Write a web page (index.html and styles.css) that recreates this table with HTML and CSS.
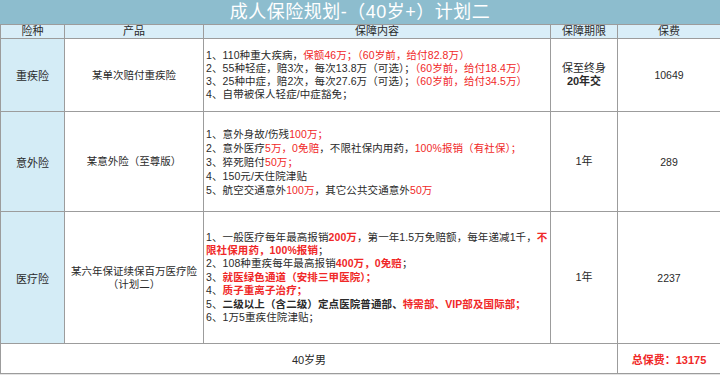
FILE: index.html
```html
<!DOCTYPE html>
<html lang="zh-CN">
<head>
    <meta charset="UTF-8">
    <meta name="viewport" content="width=device-width, initial-scale=1.0">
    <title>成人保险规划</title>
    <link rel="stylesheet" href="styles.css">
</head>
<body>
<div class="sheet">
    <div class="title">成人保险规划-（40岁+）计划二</div>

    <table class="plan">
        <colgroup>
            <col class="c-type">
            <col class="c-prod">
            <col class="c-info">
            <col class="c-term">
            <col class="c-fee">
        </colgroup>
        <tr class="head">
            <td>险种</td>
            <td>产品</td>
            <td>保障内容</td>
            <td>保障期限</td>
            <td>保费</td>
        </tr>

        <tr class="row1">
            <td class="type">重疾险</td>
            <td class="prod">某单次赔付重疾险</td>
            <td class="info">
                1、110种重大疾病，<span class="red">保额46万；（60岁前，给付82.8万）</span><br>
                2、55种轻症，赔3次，每次13.8万（可选）；<span class="red">（60岁前，给付18.4万）</span><br>
                3、25种中症，赔2次，每次27.6万（可选）；<span class="red">（60岁前，给付34.5万）</span><br>
                4、自带被保人轻症/中症豁免；
            </td>
            <td class="term">保至终身<br><b>20年交</b></td>
            <td class="fee">10649</td>
        </tr>

        <tr class="row2">
            <td class="type">意外险</td>
            <td class="prod">某意外险（至尊版）</td>
            <td class="info">
                1、意外身故/伤残<span class="red">100万；</span><br>
                2、意外医疗<span class="red">5万，0免赔</span>，不限社保内用药，<span class="red">100%报销（有社保）；</span><br>
                3、猝死赔付<span class="red">50万；</span><br>
                4、150元/天住院津贴<br>
                5、航空交通意外<span class="red">100万</span>，其它公共交通意外<span class="red">50万</span>
            </td>
            <td class="term">1年</td>
            <td class="fee">289</td>
        </tr>

        <tr class="row3">
            <td class="type">医疗险</td>
            <td class="prod">某六年保证续保百万医疗险<br>（计划二）</td>
            <td class="info">
                1、一般医疗每年最高报销<b class="red">200万</b>，第一年1.5万免赔额，每年递减1千，<b class="red">不</b><br>
                <b class="red">限社保用药，100%报销</b>；<br>
                2、108种重疾每年最高报销<b class="red">400万，0免赔</b>；<br>
                3、<b class="red">就医绿色通道（安排三甲医院）；</b><br>
                4、<b class="red">质子重离子治疗；</b><br>
                5、<b>二级以上（含二级）定点医院普通部、</b><b class="red">特需部、VIP部及国际部；</b><br>
                6、1万5重疾住院津贴；
            </td>
            <td class="term">1年</td>
            <td class="fee">2237</td>
        </tr>

        <tr class="foot">
            <td colspan="4">40岁男</td>
            <td class="total">总保费：13175</td>
        </tr>
    </table>
</div>
</body>
</html>
```

FILE: styles.css
```css
body {
    margin: 0;
    background: #e4e4e4;
    font-family: "Liberation Sans", "Noto Sans CJK SC", sans-serif;
    color: #2a2a2a;
}
.sheet {
    width: 720px;
    background: #fff;
}
.title {
    height: 24px;
    line-height: 24px;
    background: #8dbdce;
    color: #fff;
    font-size: 18px;
    text-align: center;
    letter-spacing: 0.5px;
}
.plan {
    width: 720px;
    border-collapse: collapse;
    table-layout: fixed;
    font-size: 10.5px;
}
.c-type { width: 64px; }
.c-prod { width: 139px; }
.c-info { width: 347px; }
.c-term { width: 67px; }
.c-fee  { width: 103px; }

.plan td {
    border: 1px solid #9c9c9c;
    padding: 0 2px;
    text-align: center;
    vertical-align: middle;
    white-space: nowrap;
}
.head td {
    height: 13px;
    line-height: 13px;
    background: #d9eef8;
    font-size: 11px;
}
.plan td.type {
    background: #d4ecf6;
    font-size: 11px;
}
.prod {
    line-height: 13px;
}
.info {
    text-align: left !important;
    line-height: 13px;
    letter-spacing: 0.1px;
}
.term {
    font-size: 11px;
    line-height: 13px;
}
.row1 td { height: 72px; }
.row2 td { height: 99px; }
.row2 .info { line-height: 14px; }
.row3 td { height: 131px; }
.row3 .info { line-height: 13.4px; }
.foot td {
    height: 29px;
    font-size: 11px;
    background: #fff;
}
.red {
    color: #f02828;
}
.total {
    color: #f02828;
    font-weight: bold;
}
```
